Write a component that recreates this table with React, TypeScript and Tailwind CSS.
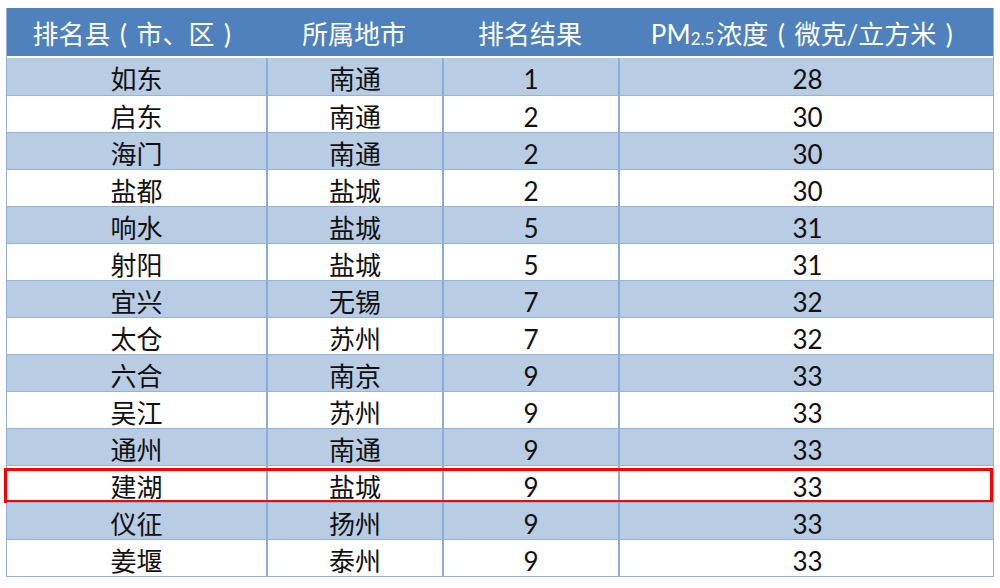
const rows: [string, string, string, string][] = [
  ["如东", "南通", "1", "28"],
  ["启东", "南通", "2", "30"],
  ["海门", "南通", "2", "30"],
  ["盐都", "盐城", "2", "30"],
  ["响水", "盐城", "5", "31"],
  ["射阳", "盐城", "5", "31"],
  ["宜兴", "无锡", "7", "32"],
  ["太仓", "苏州", "7", "32"],
  ["六合", "南京", "9", "33"],
  ["吴江", "苏州", "9", "33"],
  ["通州", "南通", "9", "33"],
  ["建湖", "盐城", "9", "33"],
  ["仪征", "扬州", "9", "33"],
  ["姜堰", "泰州", "9", "33"],
];

const cols = "grid grid-cols-[259px_176px_176px_377px]";

function Paren({ c }: { c: string }) {
  return <span className="inline-block w-[1em] text-center">{c}</span>;
}

export default function App() {
  return (
    <div
      className="w-[1000px] h-[588px] bg-white pl-[6px] pt-[8px] text-[26px] leading-none"
      style={{ fontFamily: 'Lato, "Noto Sans CJK SC", sans-serif' }}
    >
      <div className="w-[988px] border-l border-r border-b border-[#95b3d7]">
        {/* Header */}
        <div className={`${cols} h-[50px] bg-[#4f81bd] text-white border-b-2 border-white`}>
          <div className="flex items-center justify-center pt-[3px]">
            排名县<Paren c="(" />市、区<Paren c=")" />
          </div>
          <div className="flex items-center justify-center pt-[3px]">所属地市</div>
          <div className="flex items-center justify-center pt-[3px]">排名结果</div>
          <div className="flex items-center justify-center pt-[3px]">
            PM<span className="text-[17px] relative top-[5px] mr-[2px]">2.5</span>浓度<Paren c="(" />微克/立方米<Paren c=")" />
          </div>
        </div>

        {/* Body */}
        {rows.map((r, i) => (
          <div
            key={i}
            className={`${cols} relative h-[37px] text-[#111] ${
              i % 2 === 0 ? "bg-[#b8cce4]" : "bg-white"
            } ${i > 0 ? "border-t border-[#95b3d7]" : ""}`}
          >
            {r.map((c, j) => (
              <div
                key={j}
                className={`flex items-center justify-center pt-[5px] ${
                  j > 0 ? "border-l-2 border-[#8eaadb]" : ""
                }`}
              >
                {c}
              </div>
            ))}
            {i === 11 && (
              <div className="absolute left-[-3px] right-[0px] top-[2px] bottom-[-1px] border-[3px] border-[#ff0000] pointer-events-none" />
            )}
          </div>
        ))}
      </div>
    </div>
  );
}
